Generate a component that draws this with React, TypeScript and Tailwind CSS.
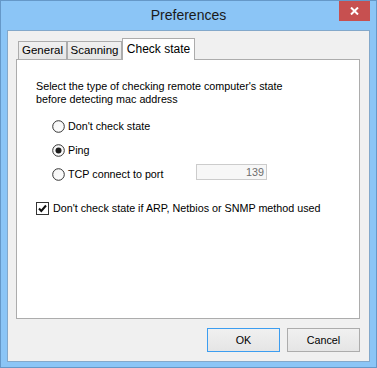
import type { ReactNode } from "react";

function Radio({ checked }: { checked?: boolean }) {
  return (
    <svg width="13" height="13" viewBox="0 0 13 13" className="shrink-0">
      <defs>
        <linearGradient id="rg" x1="0" y1="0" x2="1" y2="1">
          <stop offset="0" stopColor="#f4f4f4" />
          <stop offset="1" stopColor="#ffffff" />
        </linearGradient>
      </defs>
      <circle cx="6.5" cy="6.5" r="5.8" fill="url(#rg)" stroke="#333333" strokeWidth="1" />
      {checked && <circle cx="6.5" cy="6.5" r="3" fill="#1c1c1c" />}
    </svg>
  );
}

function RadioRow({ checked, children }: { checked?: boolean; children: ReactNode }) {
  return (
    <div className="flex h-[24px] items-center pl-[16px]">
      <Radio checked={checked} />
      <span className="ml-[3px]">{children}</span>
    </div>
  );
}

function Tab({ label, width, active }: { label: string; width: string; active?: boolean }) {
  if (active) {
    return (
      <div
        className={`${width} relative z-10 -mb-px flex h-[22px] items-center justify-center border border-b-0 border-[#acacac] bg-white pb-[2px] text-[12px]`}
      >
        {label}
      </div>
    );
  }
  return (
    <div
      className={`${width} flex h-[18px] items-center justify-center border border-b-0 border-[#acacac] bg-gradient-to-b from-[#f0f0f0] to-[#e5e5e5] text-[11.5px]`}
    >
      {label}
    </div>
  );
}

export default function App() {
  return (
    <div className="flex h-[368px] w-[377px] flex-col border border-[#6598c8] bg-[#8bc5f6] font-['Liberation_Sans',Arial,sans-serif] text-[10.75px] text-black">
      <div className="relative flex h-[29px] shrink-0 items-center justify-center">
        <span className="text-[14px] text-[#1a1a1a]">Preferences</span>
        <div className="absolute right-[6px] top-0 flex h-[20px] w-[31px] items-center justify-center bg-[#c75050]">
          <svg width="9" height="8" viewBox="0 0 9 8">
            <path d="M1 0.5 L8 7.5 M8 0.5 L1 7.5" stroke="#ffffff" strokeWidth="2" />
          </svg>
        </div>
      </div>

      <div className="mx-[6px] mb-[5px] flex flex-1 flex-col border border-[#83a8ca] bg-[#f0f0f0] pl-[8px] pr-[9px] pt-[7px]">
        <div className="flex h-[21px] items-end pl-[2px]">
          <Tab label="General" width="w-[49px]" />
          <Tab label="Scanning" width="w-[55px]" />
          <Tab label="Check state" width="w-[73px]" active />
        </div>

        <div className="flex h-[260px] flex-col border border-[#acacac] bg-white pl-[19px] pt-[20px]">
          <p className="leading-[13px]">
            Select the type of checking remote computer's state
            <br />
            before detecting mac address
          </p>

          <div className="mt-[8px] flex flex-col">
            <RadioRow>Don't check state</RadioRow>
            <RadioRow checked>Ping</RadioRow>
            <div className="flex h-[24px] items-center pl-[16px]">
              <Radio />
              <span className="ml-[3px] w-[128px]">TCP connect to port</span>
              <div className="flex h-[16px] w-[71px] -translate-y-[2px] items-center justify-end border border-[#cccccc] bg-[#f7f7f7] pr-[2px] text-[#6d6d6d]">
                139
              </div>
            </div>
          </div>

          <div className="mt-[10px] flex h-[24px] items-center">
            <svg width="13" height="13" viewBox="0 0 13 13" className="shrink-0">
              <rect x="0.5" y="0.5" width="12" height="12" fill="#ffffff" stroke="#333333" />
              <path d="M3 6.5 L5.3 9 L10 3.5" fill="none" stroke="#111111" strokeWidth="2" />
            </svg>
            <span className="ml-[4px]">Don't check state if ARP, Netbios or SNMP method used</span>
          </div>
        </div>

        <div className="mt-[9px] flex justify-end gap-[7px]">
          <button className="flex h-[24px] w-[73px] items-center justify-center border border-[#3c9df0] bg-gradient-to-b from-[#f0f0f0] to-[#e5e5e5]">
            OK
          </button>
          <button className="flex h-[24px] w-[73px] items-center justify-center border border-[#acacac] bg-gradient-to-b from-[#f0f0f0] to-[#e5e5e5]">
            Cancel
          </button>
        </div>
      </div>
    </div>
  );
}
